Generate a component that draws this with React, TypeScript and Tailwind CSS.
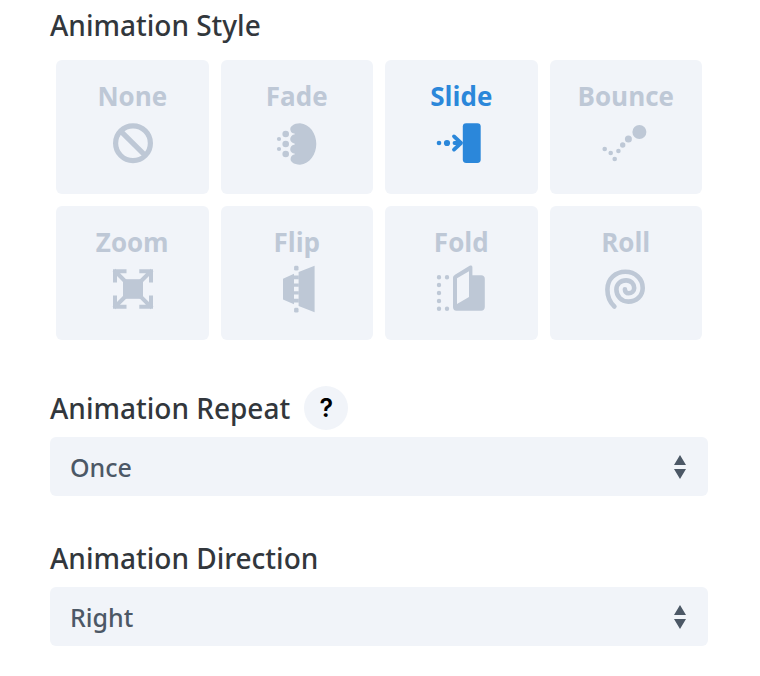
import React, { useState } from 'react';

interface StyleOption {
  name: string;
  icon: React.ReactNode;
}

const STYLE_OPTIONS: StyleOption[] = [
  {
    name: 'None',
    icon: (
      <g fill="none" stroke="currentColor" strokeWidth="5.2">
        <circle cx="1" cy="0.2" r="17.4" />
        <path d="M-11.6 -12.2L13.4 12.6" />
      </g>
    ),
  },
  {
    name: 'Fade',
    icon: (
      <g>
        <circle cx="-18" cy="-4" r="2.1" />
        <circle cx="-18" cy="6" r="2.1" />
        <circle cx="-11.3" cy="-9" r="3.3" />
        <circle cx="-11.3" cy="1" r="3.3" />
        <circle cx="-11.3" cy="11" r="3.3" />
        <path d="M3 -19.7C13 -19 19.3 -9 19.3 1S13 21 3 21.7C0 21.7 -3 21 -4.5 19.6A4.4 4.4 0 0 1 -2.4 11.6V10.6A4.4 4.4 0 0 1 -2.4 1.8V0.4A4.4 4.4 0 0 1 -2.4 -8.4V-9.4A4.4 4.4 0 0 1 -4.5 -17.6C-3 -19 0 -19.7 3 -19.7Z" />
      </g>
    ),
  },
  {
    name: 'Slide',
    icon: (
      <g>
        <rect x="1.8" y="-19.8" width="17.9" height="39.8" rx="3.4" />
        <circle cx="-22" cy="0" r="2.3" />
        <circle cx="-14" cy="0" r="3.1" />
        <path d="M-7 -6.6L0 0L-7 6.6M-6.5 0H0" fill="none" stroke="currentColor" strokeWidth="3.8" strokeLinecap="round" strokeLinejoin="round" />
      </g>
    ),
  },
  {
    name: 'Bounce',
    icon: (
      <g>
        <circle cx="13.4" cy="-11" r="7" />
        <circle cx="2.4" cy="-4" r="3.5" />
        <circle cx="-3.3" cy="2" r="2.7" />
        <circle cx="-7.6" cy="8" r="2.3" />
        <circle cx="-11.3" cy="16" r="2.3" />
        <circle cx="-15.3" cy="10" r="2.3" />
        <circle cx="-21.3" cy="6" r="2.3" />
      </g>
    ),
  },
  {
    name: 'Zoom',
    icon: (
      <g>
        <rect x="-9" y="-9.8" width="20" height="19.6" />
        <path
          d="M-17 -8.5V-17.8H-7.5M-16.6 -17.5L-7.6 -8.5M9.3 -17.8H19V-8.5M18.6 -17.5L9.6 -8.5M-17 8.5V17.8H-7.5M-16.6 17.5L-7.6 8.5M9.3 17.8H19V8.5M18.6 17.5L9.6 8.5"
          fill="none"
          stroke="currentColor"
          strokeWidth="4"
          strokeLinecap="square"
        />
      </g>
    ),
  },
  {
    name: 'Flip',
    icon: (
      <g>
        <path d="M-14 -10.3L-3 -15.2V15.2L-14 10.5ZM1.6 -17L17.6 -23.3V23.3L1.6 17Z" />
        <path d="M-3.2 -13.4H1.8V-9.8H-3.2ZM-3.2 -5.4H1.8V-2.2H-3.2ZM-3.2 2.2H1.8V5.4H-3.2ZM-3.2 9.8H1.8V13.4H-3.2Z" />
        <rect x="-2.9" y="-23.2" width="4.4" height="4.8" rx="1.4" />
        <rect x="-2.9" y="18.8" width="4.4" height="4.8" rx="1.4" />
      </g>
    ),
  },
  {
    name: 'Fold',
    icon: (
      <g>
        <path d="M-22 -11.7h0M-14 -11.7h0M-22 -4h0M-22 4h0M-22 12h0M-22 19.7h0M-14 19.7h0" stroke="currentColor" strokeWidth="4.4" strokeLinecap="round" />
        <path
          fillRule="evenodd"
          d="M-8 -11C-8 -12.5 -7.2 -13.4 -6 -14.2L8.6 -23.2C10 -24 11.4 -23.4 11.4 -21.8V-13.7H20.2C22.4 -13.7 23.8 -12.3 23.8 -10.2V18C23.8 20.4 22.4 21.8 20.2 21.8H-4.6C-6.8 21.8 -8 20.4 -8 18ZM-4 -10.7V15L8 8V-17.8Z"
        />
      </g>
    ),
  },
  {
    name: 'Roll',
    icon: (
      <path
        d="M-11.6 17.5C-16 13.5 -18.6 7 -18.6 0.5C-18.6 -10 -10.6 -17.2 -0.6 -17.2C9.4 -17.2 16.7 -10 16.7 -1C16.7 7 10.4 12.6 2.4 12.6C-4.8 12.6 -9.6 7 -9.6 0.5C-9.6 -5 -5.4 -8.6 0.1 -8.6C5.1 -8.6 8.2 -5 8.2 -1C8.2 2.2 5.6 4.2 2.6 4.2C0.3 4.2 -1.1 2.6 -1.1 0.2"
        fill="none"
        stroke="currentColor"
        strokeWidth="4.6"
        strokeLinecap="round"
      />
    ),
  },
];

const REPEAT_OPTIONS = ['Once', 'Loop'];
const DIRECTION_OPTIONS = ['Right', 'Left', 'Center', 'Up', 'Down'];

interface SelectFieldProps {
  id: string;
  value: string;
  options: string[];
  onChange: (value: string) => void;
}

const SelectField: React.FC<SelectFieldProps> = ({ id, value, options, onChange }) => (
  <div className="relative">
    <select
      id={id}
      value={value}
      onChange={(e) => onChange(e.target.value)}
      className="block w-full h-[59px] appearance-none rounded-md bg-[#f1f4f9] pt-0.5 pl-5 pr-12 text-[25px] font-medium text-[#4c5866] cursor-pointer"
    >
      {options.map((option) => (
        <option key={option} value={option}>{option}</option>
      ))}
    </select>
    <svg viewBox="0 0 12 24" className="pointer-events-none absolute inset-y-0 right-[22px] my-auto w-3 h-6 fill-[#4c5866]" aria-hidden="true">
      <path d="M6 0L12 10H0ZM0 14H12L6 24Z" />
    </svg>
  </div>
);

const App: React.FC = () => {
  const [style, setStyle] = useState('Slide');
  const [repeat, setRepeat] = useState('Once');
  const [direction, setDirection] = useState('Right');

  return (
    <main className="min-h-screen bg-white pt-1 pb-7 pl-[50px] pr-[52px] font-['Noto_Sans',sans-serif] text-[#32373c]">
      <section>
        <h2 className="text-[28px] leading-[42px] font-medium">Animation Style</h2>
        <div className="mx-1.5 mt-3.5 grid grid-cols-4 gap-3">
          {STYLE_OPTIONS.map((option) => (
            <button
              key={option.name}
              type="button"
              aria-pressed={style === option.name}
              onClick={() => setStyle(option.name)}
              className={`flex flex-col items-center gap-[7px] rounded-md bg-[#f1f4f9] pt-5 pb-[27px] cursor-pointer ${
                style === option.name ? 'text-[#2b87da]' : 'text-[#bec8d6]'
              }`}
            >
              <span className="font-['Open_Sans',sans-serif] text-[26px] leading-8 font-bold">{option.name}</span>
              <svg viewBox="-24 -24 48 48" className="size-12 overflow-visible fill-current" aria-hidden="true">
                {option.icon}
              </svg>
            </button>
          ))}
        </div>
      </section>

      <section className="mt-[46px]">
        <div className="flex items-center gap-3.5 pb-[7px]">
          <label htmlFor="repeat" className="text-[28px] leading-[42px] font-medium">Animation Repeat</label>
          <button type="button" aria-label="Help" className="size-11 rounded-full bg-[#f1f4f9] font-['Inter',sans-serif] text-[25px] leading-none font-semibold text-black cursor-pointer">
            ?
          </button>
        </div>
        <SelectField id="repeat" value={repeat} options={REPEAT_OPTIONS} onChange={setRepeat} />
      </section>

      <section className="mt-[41px]">
        <label htmlFor="direction" className="block pb-2 text-[28px] leading-[42px] font-medium">Animation Direction</label>
        <SelectField id="direction" value={direction} options={DIRECTION_OPTIONS} onChange={setDirection} />
      </section>
    </main>
  );
};

export default App;
